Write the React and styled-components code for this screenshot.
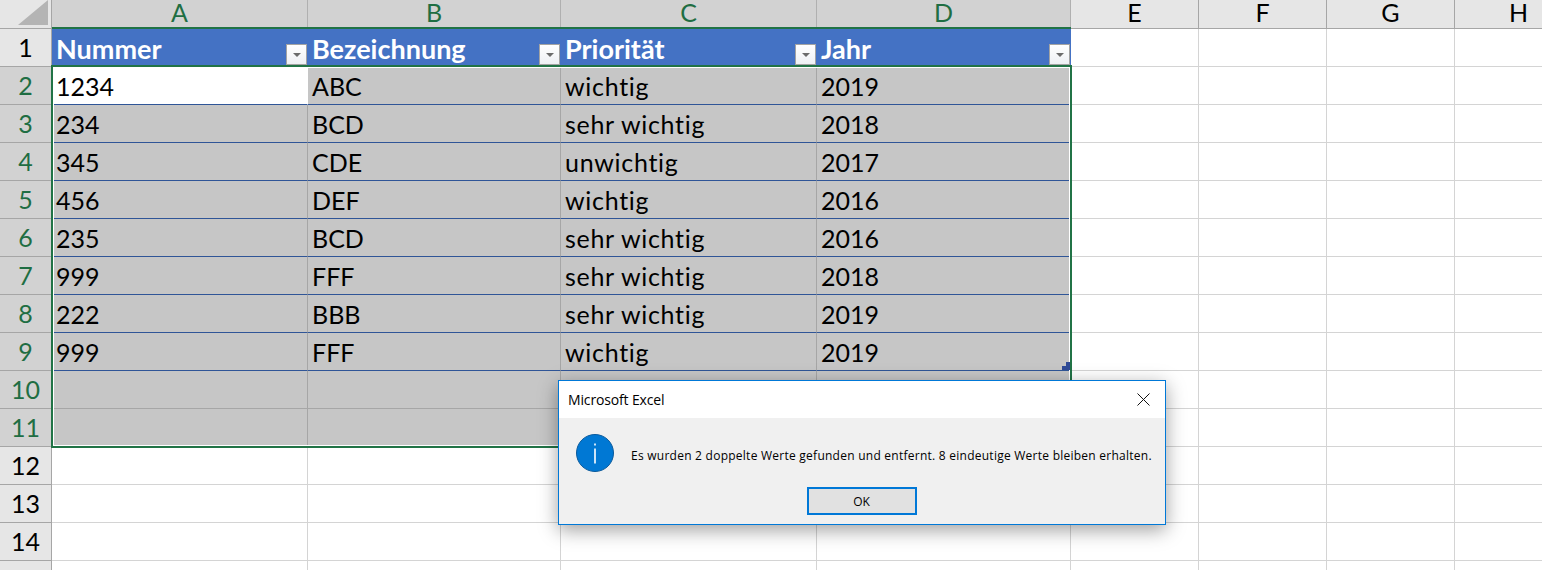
import styled, { createGlobalStyle } from "styled-components";

const GlobalStyle = createGlobalStyle`
html, body {
  margin:0;
  padding:0;
  background:#fff;
  overflow:hidden;
}
`

const columns = [
  { name: "A", title: "Nummer", active: true },
  { name: "B", title: "Bezeichnung", active: true },
  { name: "C", title: "Priorität", active: true },
  { name: "D", title: "Jahr", active: true },
  { name: "E" },
  { name: "F" },
  { name: "G" },
  { name: "H" },
]

const rows = [
  ["1234", "ABC", "wichtig", "2019"],
  ["234", "BCD", "sehr wichtig", "2018"],
  ["345", "CDE", "unwichtig", "2017"],
  ["456", "DEF", "wichtig", "2016"],
  ["235", "BCD", "sehr wichtig", "2016"],
  ["999", "FFF", "sehr wichtig", "2018"],
  ["222", "BBB", "sehr wichtig", "2019"],
  ["999", "FFF", "wichtig", "2019"],
  ["", "", "", ""],
  ["", "", "", ""],
]

const Sheet = styled.div`
position:relative;
width:1542px;
height:570px;
overflow:hidden;
background:#fff;
font-family:"Lato","Liberation Sans",sans-serif;
font-variant-ligatures:none;
`

const Grid = styled.div`
display:grid;
grid-template-columns:52px 256px 253px 256px 254px 128px 128px 128px 128px;
grid-template-rows:29px repeat(15, 38px);
width:1583px;
`

const Corner = styled.div`
background:#e6e6e6;
border-right:1px solid #a6a6a6;
border-bottom:1px solid #a6a6a6;
box-sizing:border-box;
display:flex;
align-items:flex-end;
justify-content:flex-end;
padding:0 3px 3px 0;
`

const ColHead = styled.div`
box-sizing:border-box;
background:${p => p.$active ? "#d2d2d2" : "#e6e6e6"};
color:${p => p.$active ? "#1f6e43" : "#000"};
border-right:1px solid ${p => p.$active ? "#b0b0b0" : "#a6a6a6"};
border-bottom:1px solid #a6a6a6;
font-size:25px;
line-height:24px;
text-align:center;
`

const RowHead = styled.div`
box-sizing:border-box;
background:${p => p.$active ? "#d2d2d2" : "#e6e6e6"};
color:${p => p.$active ? "#1f6e43" : "#000"};
border-right:1px solid #a6a6a6;
border-bottom:1px solid #a6a6a6;
font-size:25px;
line-height:37px;
text-align:center;
`

const TitleCell = styled.div`
box-sizing:border-box;
display:flex;
justify-content:space-between;
align-items:center;
background:#4472c4;
color:#fff;
font-size:27px;
font-weight:700;
line-height:36px;
padding:2px 1px 0 4px;
`

const FilterButton = styled.div`
box-sizing:border-box;
align-self:flex-end;
margin-bottom:2px;
width:21px;
height:21px;
display:flex;
align-items:center;
justify-content:center;
background:linear-gradient(#fff,#eef0f4);
border:1px solid #a3a3a3;
`

const FilterArrow = styled.span`
width:0;
height:0;
margin-top:1px;
border-left:4px solid transparent;
border-right:4px solid transparent;
border-top:4px solid #6b6b6b;
`

const DataCell = styled.div`
box-sizing:border-box;
background:${p => p.$current ? "#fff" : "#c6c6c6"};
color:#000;
border-right:1px solid ${p => p.$current ? "#fff" : "#a6a6a6"};
border-bottom:1px solid ${p => p.$empty ? "#a6a6a6" : "#2f5597"};
font-size:25px;
letter-spacing:${p => p.$wide ? ".7px" : "0"};
line-height:37px;
padding:1px 0 0 4px;
white-space:nowrap;
`

const BlankCell = styled.div`
box-sizing:border-box;
border-right:1px solid #d4d4d4;
border-bottom:1px solid #d4d4d4;
`

// selection frame lies over the table cells
const SelectionFrame = styled.div`
position:absolute;
left:51px;
top:65px;
width:1021px;
height:383px;
box-sizing:border-box;
border:2px solid #217346;
outline:1px solid #fff;
outline-offset:-3px;
pointer-events:none;
`

const HeaderEdge = styled.div`
position:absolute;
left:52px;
top:27px;
width:1019px;
height:2px;
background:#217346;
`

const Handle = styled.svg`
position:absolute;
left:1062px;
top:362px;
`

const Dialog = styled.div`
position:absolute;
left:558px;
top:380px;
width:608px;
height:145px;
box-sizing:border-box;
display:flex;
flex-direction:column;
background:#f0f0f0;
border:1px solid #0078d7;
box-shadow:0 5px 18px rgba(0,0,0,.38);
font-family:"Open Sans","Noto Sans",sans-serif;
color:#000;
`

const DialogBar = styled.div`
height:37px;
flex:none;
display:flex;
align-items:center;
justify-content:space-between;
background:#fff;
padding:0 15px 0 9px;
font-size:14px;
letter-spacing:-.15px;
`

const DialogBody = styled.div`
flex:1;
display:flex;
align-items:center;
gap:17px;
padding:0 0 0 17px;
height:74px;
`

const Message = styled.span`
font-size:12px;
letter-spacing:.25px;
margin-top:5px;
white-space:nowrap;
`

const DialogFooter = styled.div`
display:flex;
justify-content:center;
padding:0 0 9px 0;
margin-right:1px;
`

const OkButton = styled.button`
box-sizing:border-box;
width:110px;
height:28px;
background:#e1e1e1;
border:2px solid #0078d7;
padding:0;
font-family:inherit;
font-size:12px;
color:#000;
`

const InfoIcon = () => (
  <svg width="38" height="38" viewBox="0 0 38 38">
    <circle cx="19" cy="19" r="18.5" fill="#0078d4" stroke="#0a5a9c" strokeWidth="1" />
    <rect x="18.2" y="14.5" width="1.6" height="15" fill="#fff" />
    <rect x="18.2" y="9.5" width="1.6" height="2" fill="#fff" />
  </svg>
)

const CloseIcon = () => (
  <svg width="13" height="13" viewBox="0 0 13 13">
    <path d="M.5.5l12 12M12.5.5l-12 12" stroke="#111" strokeWidth="1" fill="none" />
  </svg>
)

const CornerMark = () => (
  <svg width="30" height="25" viewBox="0 0 30 25">
    <path d="M0 25L30 0V25Z" fill="#b4b4b4" />
  </svg>
)

const App = () => {
  const blanks = (n, key) => Array.from({ length: n }, (_, i) => <BlankCell key={key + i} />)

  return (
    <Sheet>
      <GlobalStyle />
      <Grid>
        <Corner><CornerMark /></Corner>
        {columns.map(c => <ColHead key={c.name} $active={c.active}>{c.name}</ColHead>)}

        <RowHead>1</RowHead>
        {columns.slice(0, 4).map(c => (
          <TitleCell key={c.title}>
            {c.title}
            <FilterButton><FilterArrow /></FilterButton>
          </TitleCell>
        ))}
        {blanks(4, "top")}

        {rows.map((row, r) => [
          <RowHead key={"h" + r} $active>{r + 2}</RowHead>,
          ...row.map((v, c) => (
            <DataCell key={r + "-" + c} $current={r === 0 && c === 0} $empty={r > 7} $wide={c === 2}>{v}</DataCell>
          )),
          ...blanks(4, "r" + r),
        ])}

        {[12, 13, 14, 15].map(n => [
          <RowHead key={n}>{n < 15 ? n : ""}</RowHead>,
          ...blanks(8, "b" + n),
        ])}
      </Grid>

      <HeaderEdge />
      <SelectionFrame />
      <Handle width="8" height="8" viewBox="0 0 8 8">
        <path d="M4 0H8V8H0V4H4Z" fill="#2f4a96" />
      </Handle>

      <Dialog>
        <DialogBar>
          Microsoft Excel
          <CloseIcon />
        </DialogBar>
        <DialogBody>
          <InfoIcon />
          <Message>Es wurden 2 doppelte Werte gefunden und entfernt. 8 eindeutige Werte bleiben erhalten.</Message>
        </DialogBody>
        <DialogFooter>
          <OkButton>OK</OkButton>
        </DialogFooter>
      </Dialog>
    </Sheet>
  )
}

export default App;
